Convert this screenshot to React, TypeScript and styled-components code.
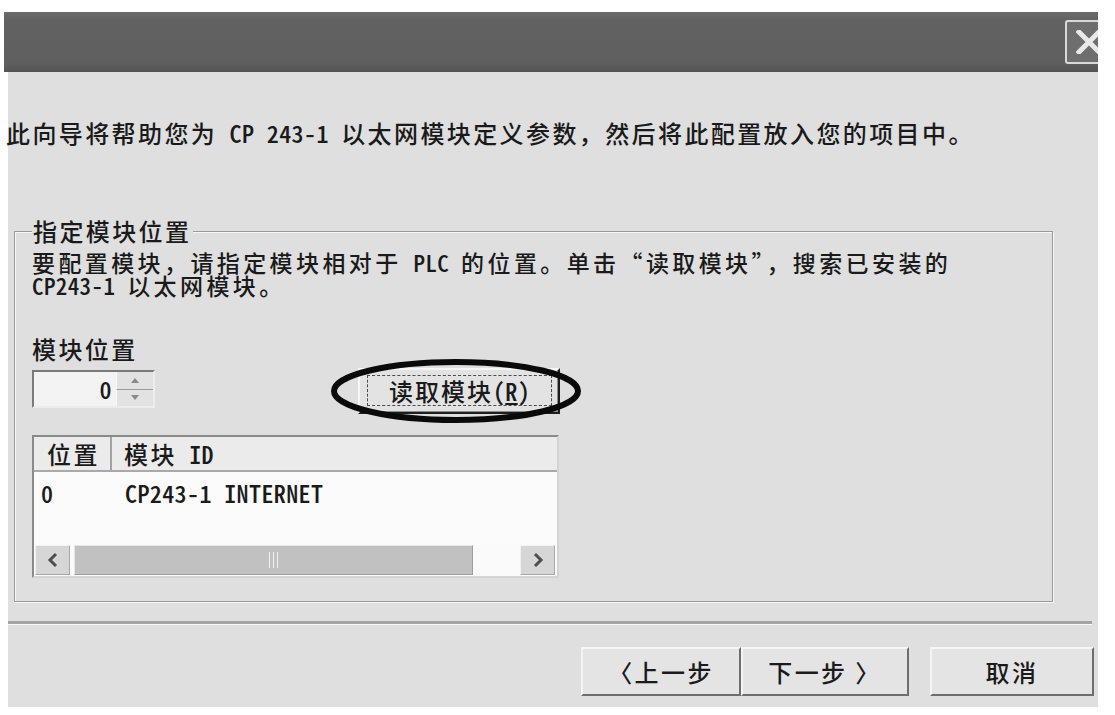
import React from "react";
import styled, { createGlobalStyle } from "styled-components";

const CJK = `"Noto Sans CJK SC", "Noto Sans", sans-serif`;
const FACE = "#dfdfdf";

const Global = createGlobalStyle`
  html, body { margin: 0; padding: 0; background: #ffffff; }
  body { font-family: ${CJK}; font-weight: 500; color: #1a1a1a; overflow: hidden; }
  * { box-sizing: border-box; }
`;

const Window = styled.div`
  margin: 12px 0 0 4px;
  width: 1094px;
  overflow: hidden;
`;

const TitleBar = styled.div`
  height: 60px;
  background: linear-gradient(#6b6b6b, #626262 15%, #5f5f5f 85%, #545454);
  display: flex;
  align-items: center;
  justify-content: flex-end;
`;

const CloseBox = styled.div`
  width: 48px;
  height: 44px;
  margin-right: -15px;
  border: 2px solid #d9d9d9;
  border-radius: 3px;
  background: #6e6e6e;
  display: flex;
  align-items: center;
  justify-content: center;
`;

const Body = styled.div`
  margin-left: 4px;
  width: 1090px;
  background: ${FACE};
  padding: 46px 0 11px;
  display: flex;
  flex-direction: column;
`;

const Text = styled.div<{ $lh?: number; $fs?: number }>`
  font-size: ${(p) => p.$fs ?? 24}px;
  line-height: ${(p) => p.$lh ?? 26}px;
  letter-spacing: ${(p) => 26.4 - (p.$fs ?? 24)}px;
  white-space: nowrap;
`;

const Lat = styled.span`
  font-feature-settings: "hwid" 1;
  letter-spacing: 0.4px;
`;

const Intro = styled(Text)`
  margin-left: -2px;
`;

const Group = styled.fieldset`
  margin: 70px 45px 0 6px;
  padding: 7px 17px 23px;
  border: 1px solid #9a9a9a;
  box-shadow: inset 1px 1px 0 #f7f7f7, 1px 1px 0 #f7f7f7;
  min-width: 0;
`;

const Legend = styled.legend`
  padding: 0 2px 0 1px;
  background: ${FACE};
  font-size: 24px;
  line-height: 26px;
  letter-spacing: 2.4px;
`;

const FieldLabel = styled(Text)`
  margin-top: 39px;
`;

const ControlRow = styled.div`
  margin-top: 6px;
  display: flex;
  align-items: flex-start;
`;

const Spin = styled.div`
  width: 123px;
  height: 38px;
  margin-top: 2px;
  border: 2px solid;
  border-color: #7a7a7a #ececec #ececec #7a7a7a;
  background: #f3f3f3;
  display: flex;
`;

const SpinValue = styled.div`
  flex: 1;
  text-align: right;
  padding-right: 4px;
  font-size: 24px;
  line-height: 34px;
`;

const SpinButtons = styled.div`
  width: 37px;
  display: flex;
  flex-direction: column;
`;

const SpinHalf = styled.div<{ $down?: boolean }>`
  flex: 1;
  background: #e2e2e2;
  border-top: ${(p) => (p.$down ? "1px solid #9a9a9a" : "0")};
  border-left: 1px solid #f8f8f8;
  display: flex;
  align-items: center;
  justify-content: center;
`;

const ReadWrap = styled.div`
  position: relative;
  margin-left: 203px;
`;

const ReadButton = styled.button`
  width: 202px;
  height: 46px;
  padding: 5px 6px 6px 7px;
  border: 2px solid;
  border-color: #f6f6f6 #1e1e1e #1e1e1e #f6f6f6;
  box-shadow: inset -1px -1px 0 #8c8c8c;
  background: #e3e3e3;
  font-family: ${CJK};
  font-weight: 500;
  color: #1a1a1a;
  cursor: default;
`;

const FocusRect = styled.div`
  height: 100%;
  border: 1px dashed #4a4a4a;
  display: flex;
  align-items: center;
  justify-content: center;
  font-size: 24px;
  letter-spacing: 2px;
  line-height: 26px;
`;

const Mnemonic = styled.span`
  text-decoration: underline;
  text-underline-offset: 2px;
`;

const Ellipse = styled.svg`
  position: absolute;
  left: -28px;
  top: -10px;
  pointer-events: none;
`;

const List = styled.div`
  margin-top: 21px;
  width: 527px;
  height: 143px;
  border: 2px solid;
  border-color: #8a8a8a #d4d4d4 #d4d4d4 #8a8a8a;
  background: #fbfbfb;
  display: flex;
  flex-direction: column;
`;

const HeaderRow = styled.div`
  height: 35px;
  display: grid;
  grid-template-columns: 78px 1fr;
  background: #ebebeb;
  border-bottom: 2px solid #a9a9a9;
`;

const HeaderCell = styled.div<{ $divider?: boolean }>`
  padding-left: ${(p) => (p.$divider ? 13 : 12)}px;
  border-right: ${(p) => (p.$divider ? "2px solid #a2a2a2" : "0")};
  font-size: 24px;
  line-height: 33px;
  letter-spacing: 2.4px;
  white-space: nowrap;
`;

const DataRow = styled.div`
  margin-top: 6px;
  height: 30px;
  display: grid;
  grid-template-columns: 78px 1fr;
  font-size: 24px;
  line-height: 30px;
`;

const DataCell = styled.div<{ $pad: number }>`
  padding-left: ${(p) => p.$pad}px;
  white-space: nowrap;
`;

const Spacer = styled.div`
  flex: 1;
`;

const HScroll = styled.div`
  height: 30px;
  margin-bottom: 1px;
  padding: 0 2px 0 1px;
  display: flex;
  align-items: stretch;
`;

const ScrollArrow = styled.div`
  width: 35px;
  background: #d6d6d6;
  border: 1px solid;
  border-color: #f2f2f2 #a8a8a8 #a8a8a8 #f2f2f2;
  display: flex;
  align-items: center;
  justify-content: center;
`;

const Thumb = styled.div`
  width: 399px;
  margin-left: 4px;
  background: #c1c1c1;
  border: 1px solid;
  border-color: #e6e6e6 #9e9e9e #9e9e9e #e6e6e6;
  display: flex;
  align-items: center;
  justify-content: center;
`;

const Grip = styled.div`
  width: 9px;
  height: 16px;
  border-left: 1px solid #f0f0f0;
  border-right: 1px solid #f0f0f0;
  position: relative;
  &::after {
    content: "";
    position: absolute;
    left: 3px;
    top: 0;
    width: 1px;
    height: 100%;
    background: #f0f0f0;
  }
`;

const Track = styled.div`
  flex: 1;
  background: #fafafa;
`;

const Separator = styled.div`
  margin: 19px 6px 0 0;
  height: 4px;
  border-top: 3px solid #a4a4a4;
  border-bottom: 1px solid #fafafa;
`;

const Footer = styled.div`
  padding: 22px 4px 0 0;
  display: flex;
  justify-content: flex-end;
`;

const NavButton = styled.button<{ $w: number; $gap?: number }>`
  width: ${(p) => p.$w}px;
  height: 49px;
  margin-left: ${(p) => p.$gap ?? 0}px;
  border: 2px solid;
  border-color: #f6f6f6 #6e6e6e #6e6e6e #f4f4f4;
  background: #e4e4e4;
  font-family: ${CJK};
  font-weight: 500;
  font-size: 24px;
  letter-spacing: 2.4px;
  color: #1a1a1a;
  padding: 0;
  cursor: default;
`;

const Chevron: React.FC<{ dir: "left" | "right" }> = ({ dir }) => (
  <svg width="12" height="16" viewBox="0 0 12 16">
    <polyline
      points={dir === "left" ? "9,2 3,8 9,14" : "3,2 9,8 3,14"}
      fill="none"
      stroke="#4e4e4e"
      strokeWidth="3"
    />
  </svg>
);

const SpinTick: React.FC<{ up?: boolean }> = ({ up }) => (
  <svg width="8" height="5" viewBox="0 0 8 5">
    <polygon points={up ? "4,0 8,5 0,5" : "0,0 8,0 4,5"} fill="#8a8a8a" />
  </svg>
);

export default function App() {
  return (
    <>
      <Global />
      <Window>
        <TitleBar>
          <CloseBox>
            <svg width="26" height="24" viewBox="0 0 26 24">
              <path d="M3 2 L23 22 M23 2 L3 22" stroke="#e8e8e8" strokeWidth="5" strokeLinecap="square" />
            </svg>
          </CloseBox>
        </TitleBar>
        <Body>
          <Intro $lh={30}>
            此向导将帮助您为<Lat> CP 243-1 </Lat>以太网模块定义参数，然后将此配置放入您的项目中。
          </Intro>
          <Group>
            <Legend>指定模块位置</Legend>
            <Text $lh={23} $fs={23}>
              要配置模块，请指定模块相对于<Lat> PLC </Lat>的位置。单击“读取模块”，搜索已安装的
            </Text>
            <Text $lh={23} $fs={23}>
              <Lat>CP243-1 </Lat>以太网模块。
            </Text>
            <FieldLabel>模块位置</FieldLabel>
            <ControlRow>
              <Spin>
                <SpinValue>
                  <Lat>0</Lat>
                </SpinValue>
                <SpinButtons>
                  <SpinHalf>
                    <SpinTick up />
                  </SpinHalf>
                  <SpinHalf $down>
                    <SpinTick />
                  </SpinHalf>
                </SpinButtons>
              </Spin>
              <ReadWrap>
                <ReadButton>
                  <FocusRect>
                    读取模块<Lat>(</Lat>
                    <Mnemonic>
                      <Lat>R</Lat>
                    </Mnemonic>
                    <Lat>)</Lat>
                  </FocusRect>
                </ReadButton>
                <Ellipse width="252" height="66" viewBox="0 0 252 66">
                  <ellipse cx="126" cy="33" rx="122" ry="29" fill="none" stroke="#0a0a0a" strokeWidth="6" />
                </Ellipse>
              </ReadWrap>
            </ControlRow>
            <List>
              <HeaderRow>
                <HeaderCell $divider>位置</HeaderCell>
                <HeaderCell>
                  模块<Lat> ID</Lat>
                </HeaderCell>
              </HeaderRow>
              <DataRow>
                <DataCell $pad={7}>
                  <Lat>0</Lat>
                </DataCell>
                <DataCell $pad={13}>
                  <Lat>CP243-1 INTERNET</Lat>
                </DataCell>
              </DataRow>
              <Spacer />
              <HScroll>
                <ScrollArrow>
                  <Chevron dir="left" />
                </ScrollArrow>
                <Thumb>
                  <Grip />
                </Thumb>
                <Track />
                <ScrollArrow>
                  <Chevron dir="right" />
                </ScrollArrow>
              </HScroll>
            </List>
          </Group>
          <Separator />
          <Footer>
            <NavButton $w={160}>〈上一步</NavButton>
            <NavButton $w={168}>下一步 〉</NavButton>
            <NavButton $w={164} $gap={21}>
              取消
            </NavButton>
          </Footer>
        </Body>
      </Window>
    </>
  );
}
